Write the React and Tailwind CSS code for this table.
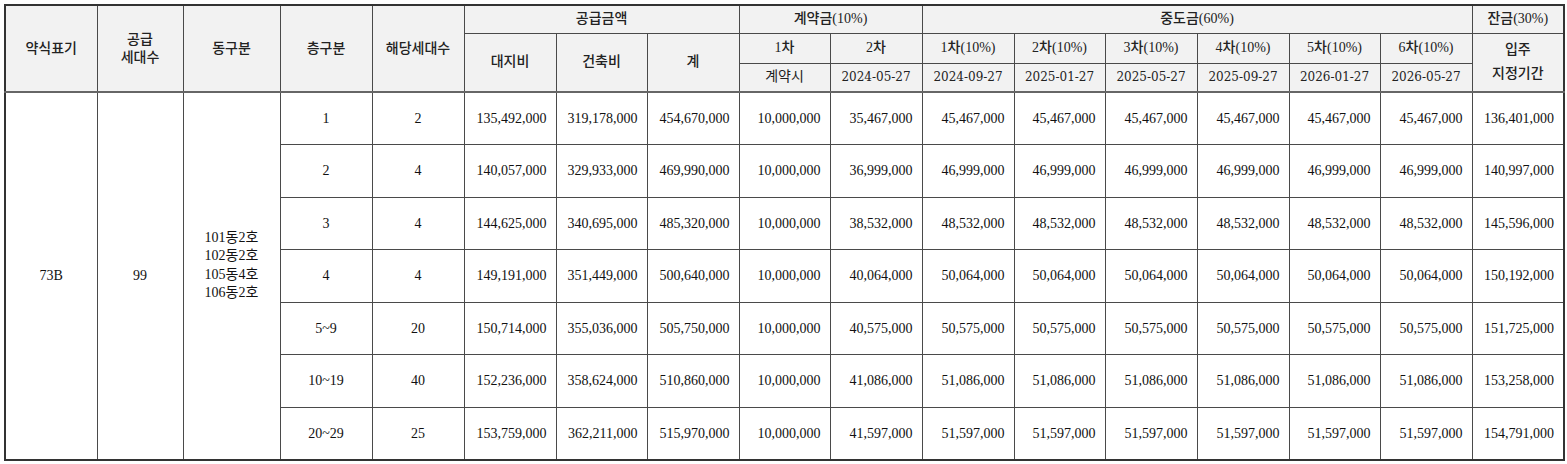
import React from "react";

const widths = [92, 86, 97, 92, 92, 92, 91, 92, 91, 92, 92, 91, 92, 92, 91, 92, 92];

const rows = [
  ["1", "2", "135,492,000", "319,178,000", "454,670,000", "10,000,000", "35,467,000", "45,467,000", "136,401,000"],
  ["2", "4", "140,057,000", "329,933,000", "469,990,000", "10,000,000", "36,999,000", "46,999,000", "140,997,000"],
  ["3", "4", "144,625,000", "340,695,000", "485,320,000", "10,000,000", "38,532,000", "48,532,000", "145,596,000"],
  ["4", "4", "149,191,000", "351,449,000", "500,640,000", "10,000,000", "40,064,000", "50,064,000", "150,192,000"],
  ["5~9", "20", "150,714,000", "355,036,000", "505,750,000", "10,000,000", "40,575,000", "50,575,000", "151,725,000"],
  ["10~19", "40", "152,236,000", "358,624,000", "510,860,000", "10,000,000", "41,086,000", "51,086,000", "153,258,000"],
  ["20~29", "25", "153,759,000", "362,211,000", "515,970,000", "10,000,000", "41,597,000", "51,597,000", "154,791,000"],
];

const th = "border border-[#4a4a4a] bg-[#f2f2f2] text-center align-middle font-medium text-[14px] text-[#222] leading-[18px]";
const thDate = "border border-[#4a4a4a] bg-[#f2f2f2] text-center align-middle font-normal text-[12px] text-[#222] font-['DejaVu_Serif','Noto_Sans_CJK_KR',serif]";
const td = "border border-[#4a4a4a] align-middle text-[14px] text-[#111]";
const num = td + " text-right pr-[9px]";
const ctr = td + " text-center";

export default function App() {
  const mid = ["2024-09-27", "2025-01-27", "2025-05-27", "2025-09-27", "2026-01-27", "2026-05-27"];
  return (
    <div className="p-[4px] bg-white" style={{ fontFamily: '"Liberation Serif", "Noto Sans CJK KR", serif' }}>
      <table className="table-fixed border-collapse border-2 border-[#333] w-[1559px]">
        <colgroup>
          {widths.map((w, i) => (
            <col key={i} style={{ width: w }} />
          ))}
        </colgroup>
        <thead>
          <tr className="h-[28px]">
            <th rowSpan={3} className={th}>약식표기</th>
            <th rowSpan={3} className={th}>공급<br />세대수</th>
            <th rowSpan={3} className={th}>동구분</th>
            <th rowSpan={3} className={th}>층구분</th>
            <th rowSpan={3} className={th}>해당세대수</th>
            <th colSpan={3} className={th}>공급금액</th>
            <th colSpan={2} className={th}>계약금(10%)</th>
            <th colSpan={6} className={th}>중도금(60%)</th>
            <th className={th}>잔금(30%)</th>
          </tr>
          <tr className="h-[30px]">
            <th rowSpan={2} className={th}>대지비</th>
            <th rowSpan={2} className={th}>건축비</th>
            <th rowSpan={2} className={th}>계</th>
            <th className={th}>1차</th>
            <th className={th}>2차</th>
            {[1, 2, 3, 4, 5, 6].map((n) => (
              <th key={n} className={th}>{n}차(10%)</th>
            ))}
            <th rowSpan={2} className={th + " leading-[24px]"}>입주<br />지정기간</th>
          </tr>
          <tr className="h-[29px] border-b-2 border-b-[#666]">
            <th className={th + " text-[12px] font-normal"}>계약시</th>
            <th className={thDate}>2024-05-27</th>
            {mid.map((d) => (
              <th key={d} className={thDate}>{d}</th>
            ))}
          </tr>
        </thead>
        <tbody>
          {rows.map((r, i) => (
            <tr key={i} className="h-[52.5px]">
              {i === 0 && (
                <>
                  <td rowSpan={7} className={ctr + " text-[13px]"}>73B</td>
                  <td rowSpan={7} className={ctr + " text-[13px]"}>99</td>
                  <td rowSpan={7} className={ctr + " text-[13px] leading-[18.5px] pb-[20px]"}>
                    101동2호<br />102동2호<br />105동4호<br />106동2호
                  </td>
                </>
              )}
              <td className={ctr + " text-[13px]"}>{r[0]}</td>
              <td className={ctr + " text-[13px]"}>{r[1]}</td>
              <td className={num}>{r[2]}</td>
              <td className={num}>{r[3]}</td>
              <td className={num}>{r[4]}</td>
              <td className={num}>{r[5]}</td>
              <td className={num}>{r[6]}</td>
              {[0, 1, 2, 3, 4, 5].map((k) => (
                <td key={k} className={num}>{r[7]}</td>
              ))}
              <td className={num}>{r[8]}</td>
            </tr>
          ))}
        </tbody>
      </table>
    </div>
  );
}
